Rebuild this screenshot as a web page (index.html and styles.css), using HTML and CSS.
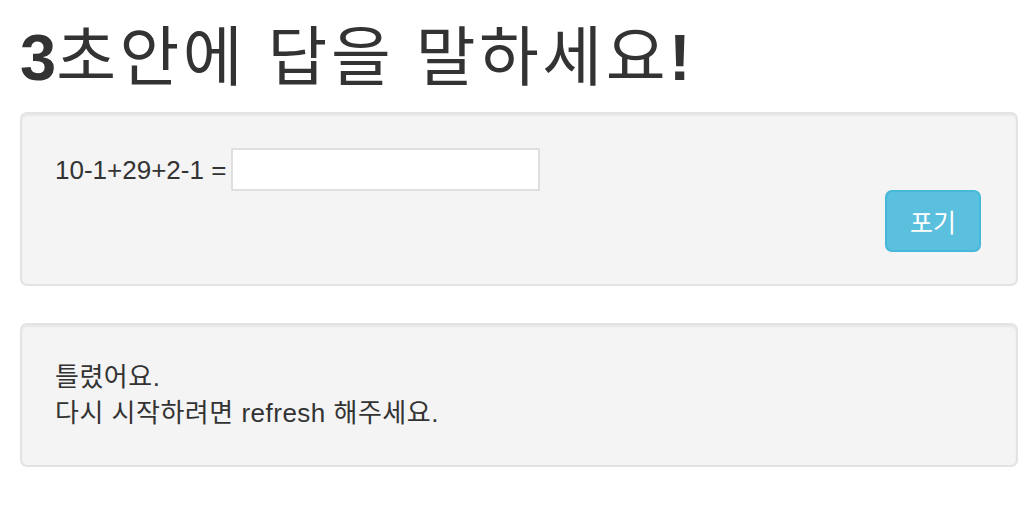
FILE: index.html
```html
<!DOCTYPE html>
<html lang="ko">
<head>
<meta charset="utf-8">
<title>3초안에 답을 말하세요!</title>
<link rel="stylesheet" href="styles.css">
</head>
<body>
<div class="container">
  <h1 class="title"><span class="latin">3</span>초안에 답을 말하세요<span class="latin">!</span></h1>
  <div class="well well-form">
    <form class="quiz">
      <div class="question">
        <label class="expr" for="answer">10-1+29+2-1 =</label>
        <input class="answer" id="answer" type="text">
      </div>
      <div class="actions">
        <button class="btn-info" type="button">포기</button>
      </div>
    </form>
  </div>
  <div class="well">
    <p class="message">틀렸어요.<br>다시 시작하려면 refresh 해주세요.</p>
  </div>
</div>
</body>
</html>
```
FILE: styles.css
```css
html, body {
  margin: 0;
  padding: 0;
  background: #fff;
}
body {
  font-family: "Liberation Sans", "Noto Sans CJK KR", sans-serif;
  font-size: 26px;
  line-height: 36px;
  color: #333;
}
.container {
  padding: 0 18px 0 20px;
}
.title {
  margin: 22px 0 18px;
  font-size: 65px;
  line-height: 72px;
  font-weight: 400;
  color: #333;
  letter-spacing: 3.5px;
}
.latin {
  font-weight: 700;
  letter-spacing: 0;
}
.well {
  background: #f4f4f4;
  border: 2px solid #e3e3e3;
  border-radius: 7px;
  box-shadow: inset 0 2px 2px rgba(0, 0, 0, 0.05);
  padding: 34px 34px 34px 33px;
  margin-bottom: 37px;
}
.well-form {
  padding-bottom: 32px;
}
.quiz {
  display: flex;
  flex-direction: column;
  margin: 0;
}
.question {
  display: flex;
  align-items: center;
  gap: 5px;
}
.answer {
  width: 309px;
  height: 43px;
  box-sizing: border-box;
  border: 2px solid #dfdfdf;
  background: #fff;
  margin: 0;
  padding: 0 4px;
  font: inherit;
}
.actions {
  display: flex;
  justify-content: flex-end;
  margin-top: -1px;
}
.btn-info {
  width: 96px;
  height: 62px;
  box-sizing: border-box;
  background: #5bc0de;
  border: 2px solid #46b8da;
  border-radius: 7px;
  color: #fff;
  font-family: "Liberation Sans", "Noto Sans CJK KR", sans-serif;
  font-size: 25px;
  padding: 0;
  margin-right: 1px;
}
.message {
  margin: 0;
  letter-spacing: 0.5px;
}
```
